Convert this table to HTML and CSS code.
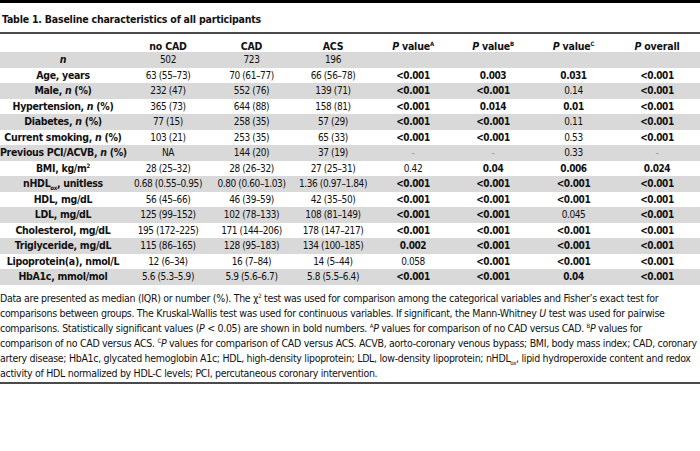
FILE: index.html
```html
<!DOCTYPE html>
<html lang="en">

<head>
  <meta charset="UTF-8">
  <meta name="viewport" content="width=device-width, initial-scale=1.0">
  <title>Table 1. Baseline characteristics of all participants</title>
  <link rel="stylesheet" href="styles.css">
</head>

<body>
  <div class="top-bar"></div>

  <div class="caption">Table 1. Baseline characteristics of all participants</div>

  <table class="data-table">
    <colgroup>
      <col class="col-label">
      <col class="col-a">
      <col class="col-b">
      <col class="col-c">
      <col class="col-c">
      <col class="col-c">
      <col class="col-d">
      <col class="col-e">
    </colgroup>
    <thead>
      <tr>
        <th></th>
        <th>no CAD</th>
        <th>CAD</th>
        <th>ACS</th>
        <th><i>P</i> value<sup>A</sup></th>
        <th><i>P</i> value<sup>B</sup></th>
        <th><i>P</i> value<sup>C</sup></th>
        <th><i>P</i> overall</th>
      </tr>
    </thead>
    <tbody>
      <tr>
        <th><i>n</i></th>
        <td>502</td><td>723</td><td>196</td>
        <td></td><td></td><td></td><td></td>
      </tr>
      <tr>
        <th>Age, years</th>
        <td>63 (55–73)</td><td>70 (61–77)</td><td>66 (56–78)</td>
        <td class="sig">&lt;0.001</td><td class="sig">0.003</td><td class="sig">0.031</td><td class="sig">&lt;0.001</td>
      </tr>
      <tr>
        <th>Male, <i>n</i> (%)</th>
        <td>232 (47)</td><td>552 (76)</td><td>139 (71)</td>
        <td class="sig">&lt;0.001</td><td class="sig">&lt;0.001</td><td>0.14</td><td class="sig">&lt;0.001</td>
      </tr>
      <tr>
        <th>Hypertension, <i>n</i> (%)</th>
        <td>365 (73)</td><td>644 (88)</td><td>158 (81)</td>
        <td class="sig">&lt;0.001</td><td class="sig">0.014</td><td class="sig">0.01</td><td class="sig">&lt;0.001</td>
      </tr>
      <tr>
        <th>Diabetes, <i>n</i> (%)</th>
        <td>77 (15)</td><td>258 (35)</td><td>57 (29)</td>
        <td class="sig">&lt;0.001</td><td class="sig">&lt;0.001</td><td>0.11</td><td class="sig">&lt;0.001</td>
      </tr>
      <tr>
        <th>Current smoking, <i>n</i> (%)</th>
        <td>103 (21)</td><td>253 (35)</td><td>65 (33)</td>
        <td class="sig">&lt;0.001</td><td class="sig">&lt;0.001</td><td>0.53</td><td class="sig">&lt;0.001</td>
      </tr>
      <tr>
        <th>Previous PCI/ACVB, <i>n</i> (%)</th>
        <td>NA</td><td>144 (20)</td><td>37 (19)</td>
        <td class="dash">-</td><td class="dash">-</td><td>0.33</td><td class="dash">-</td>
      </tr>
      <tr>
        <th>BMI, kg/m<sup>2</sup></th>
        <td>28 (25–32)</td><td>28 (26–32)</td><td>27 (25–31)</td>
        <td>0.42</td><td class="sig">0.04</td><td class="sig">0.006</td><td class="sig">0.024</td>
      </tr>
      <tr>
        <th>nHDL<sub>ox</sub>, unitless</th>
        <td>0.68 (0.55–0.95)</td><td>0.80 (0.60–1.03)</td><td>1.36 (0.97–1.84)</td>
        <td class="sig">&lt;0.001</td><td class="sig">&lt;0.001</td><td class="sig">&lt;0.001</td><td class="sig">&lt;0.001</td>
      </tr>
      <tr>
        <th>HDL, mg/dL</th>
        <td>56 (45–66)</td><td>46 (39–59)</td><td>42 (35–50)</td>
        <td class="sig">&lt;0.001</td><td class="sig">&lt;0.001</td><td class="sig">&lt;0.001</td><td class="sig">&lt;0.001</td>
      </tr>
      <tr>
        <th>LDL, mg/dL</th>
        <td>125 (99–152)</td><td>102 (78–133)</td><td>108 (81–149)</td>
        <td class="sig">&lt;0.001</td><td class="sig">&lt;0.001</td><td>0.045</td><td class="sig">&lt;0.001</td>
      </tr>
      <tr>
        <th>Cholesterol, mg/dL</th>
        <td>195 (172–225)</td><td>171 (144–206)</td><td>178 (147–217)</td>
        <td class="sig">&lt;0.001</td><td class="sig">&lt;0.001</td><td class="sig">&lt;0.001</td><td class="sig">&lt;0.001</td>
      </tr>
      <tr>
        <th>Triglyceride, mg/dL</th>
        <td>115 (86–165)</td><td>128 (95–183)</td><td>134 (100–185)</td>
        <td class="sig">0.002</td><td class="sig">&lt;0.001</td><td class="sig">&lt;0.001</td><td class="sig">&lt;0.001</td>
      </tr>
      <tr>
        <th>Lipoprotein(a), nmol/L</th>
        <td>12 (6–34)</td><td>16 (7–84)</td><td>14 (5–44)</td>
        <td>0.058</td><td class="sig">&lt;0.001</td><td class="sig">&lt;0.001</td><td class="sig">&lt;0.001</td>
      </tr>
      <tr>
        <th>HbA1c, mmol/mol</th>
        <td>5.6 (5.3–5.9)</td><td>5.9 (5.6–6.7)</td><td>5.8 (5.5–6.4)</td>
        <td class="sig">&lt;0.001</td><td class="sig">&lt;0.001</td><td class="sig">0.04</td><td class="sig">&lt;0.001</td>
      </tr>
    </tbody>
  </table>

  <p class="notes">Data are presented as median (IQR) or number (%). The χ<sup>2</sup> test was used for comparison among the categorical variables and Fisher’s exact test for<br>comparisons between groups. The Kruskal-Wallis test was used for continuous variables. If significant, the Mann-Whitney <i>U</i> test was used for pairwise<br>comparisons. Statistically significant values (<i>P</i> &lt; 0.05) are shown in bold numbers. <sup>A</sup><i>P</i> values for comparison of no CAD versus CAD. <sup>B</sup><i>P</i> values for<br>comparison of no CAD versus ACS. <sup>C</sup><i>P</i> values for comparison of CAD versus ACS. ACVB, aorto-coronary venous bypass; BMI, body mass index; CAD, coronary<br>artery disease; HbA1c, glycated hemoglobin A1c; HDL, high-density lipoprotein; LDL, low-density lipoprotein; nHDL<sub>ox</sub>, lipid hydroperoxide content and redox<br>activity of HDL normalized by HDL-C levels; PCI, percutaneous coronary intervention.</p>

  <div class="end-rule"></div>
</body>

</html>
```

FILE: styles.css
```css
body {
  margin: 0;
  padding: 0;
  background-color: #fff;
  color: #111;
  font-family: "DejaVu Sans Condensed", "DejaVu Sans", sans-serif;
  font-size: 10.5px;
}

.top-bar {
  height: 3px;
  background-color: #000;
}

.caption {
  padding: 9px 2px 6px;
  font-size: 10.5px;
  font-weight: bold;
  letter-spacing: -0.2px;
  line-height: 14px;
  border-bottom: 2px solid #4a4a4a;
}

.data-table {
  width: 700px;
  table-layout: fixed;
  border-collapse: collapse;
}

.col-label { width: 126px; }
.col-a { width: 84px; }
.col-b { width: 83px; }
.col-c { width: 80px; }
.col-d { width: 81px; }
.col-e { width: 86px; }

.data-table th,
.data-table td {
  padding: 0;
  text-align: center;
  white-space: nowrap;
  line-height: 15.5px;
  height: 15.5px;
}

.data-table td {
  font-size: 10px;
  letter-spacing: -0.4px;
}

.data-table thead th {
  height: 18px;
  line-height: 11px;
  vertical-align: bottom;
  font-weight: bold;
  letter-spacing: -0.2px;
}

.data-table tbody th {
  font-weight: bold;
  letter-spacing: -0.3px;
}

.data-table tbody tr:nth-child(odd) {
  background-color: #d9d9d9;
}

.data-table .sig {
  font-weight: bold;
}

.data-table .dash {
  color: #999;
}

sup,
sub {
  font-size: 6px;
  line-height: 0;
}

.notes {
  margin: 6px 0 0;
  line-height: 15px;
  letter-spacing: -0.3px;
  white-space: nowrap;
}

.end-rule {
  margin-top: 1px;
  border-top: 2px solid #4a4a4a;
}
```
